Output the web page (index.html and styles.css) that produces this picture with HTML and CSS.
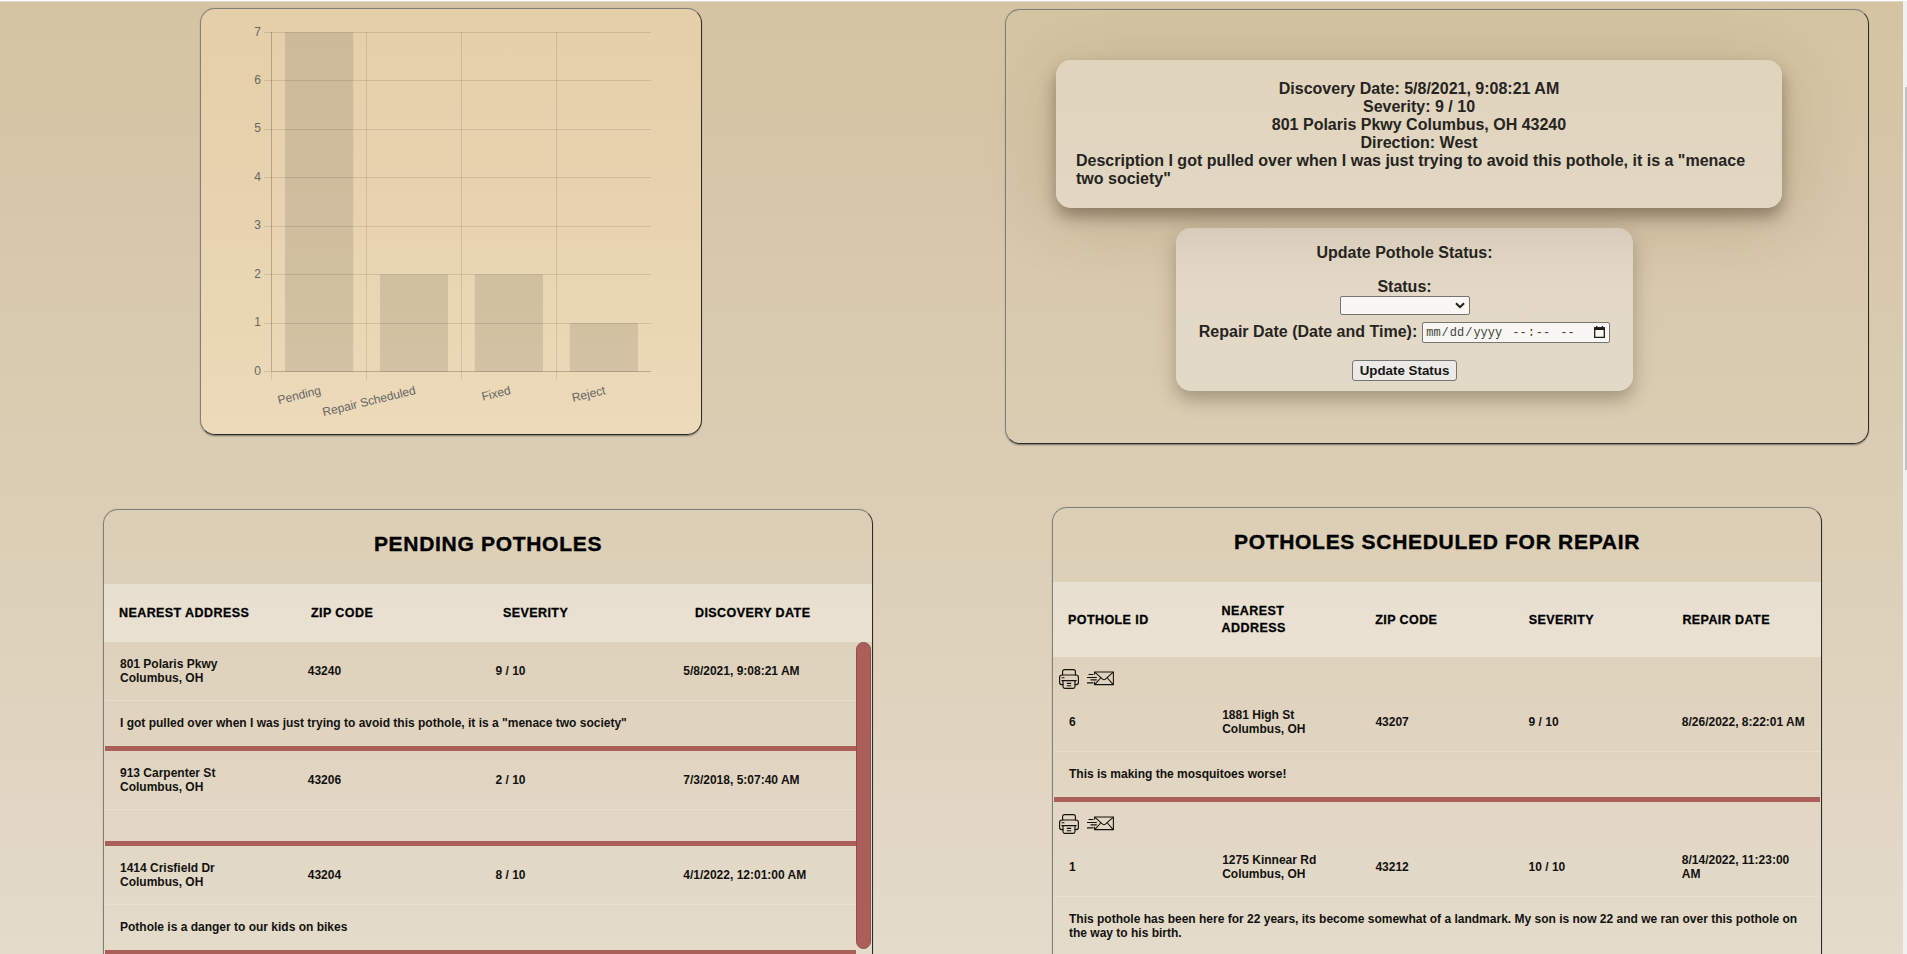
FILE: index.html
```html
<!DOCTYPE html>
<html lang="en">
<head>
<meta charset="utf-8">
<title>Pothole Dashboard</title>
<link rel="stylesheet" href="styles.css">
</head>
<body>
<svg width="0" height="0" class="defs">
  <symbol id="printer" viewBox="0 0 20 20">
    <g fill="none" stroke="#14120e" stroke-width="1.15" stroke-linejoin="round" stroke-linecap="round">
      <path d="M3.6 6V2.6Q3.6.6 5.6.6H14.4Q16.4.6 16.4 2.6V6"/>
      <path d="M4 15.6H2.6Q.6 15.6 .6 13.6V8.6Q.6 6 3 6H17Q19.4 6 19.4 8.6V13.6Q19.4 15.6 17.4 15.6H16"/>
      <path d="M4 11.6H16V17.6Q16 19.4 14.2 19.4H5.8Q4 19.4 4 17.6ZM2.8 11.6H17.2M3 8.7H5M8.2 14.3H11.8M8.2 16.7H11.8"/>
    </g>
  </symbol>
  <symbol id="mail" viewBox="0 0 27 15">
    <g fill="none" stroke="#14120e" stroke-width="1.1">
      <path d="M7.6 3.6V1H26.4V13.6H7.6V10.8"/>
      <path d="M8 1.3L15.6 8.2Q17 9.4 18.4 8.2L26 1.3M8 13.4L13.6 7M26 13.4L20.4 7"/>
      <path d="M1.5 3.5H6.5M0 6.5H9.8M3.5 8.9H9.8M0 11.9H6.5"/>
    </g>
  </symbol>
</svg>
<main class="page">
  <section class="col col-left">
    <div class="card chart-card">
      <svg class="chart" width="500" height="425" viewBox="201 9 500 425">
        <g class="grid">
          <path d="M264 32.5H651M264 80.5H651M264 129.5H651M264 177.5H651M264 226.5H651M264 274.5H651M264 323.5H651M264 371.5H271"/>
          <path d="M366.5 32V380M461.5 32V380M556.5 32V380M271.5 372V380"/>
          <path class="axis" d="M271.5 32V371M271 371.5H651"/>
        </g>
        <g class="bars">
          <rect x="285" y="32" width="68.2" height="339.5"/>
          <rect x="379.9" y="274.3" width="68.2" height="97.2"/>
          <rect x="474.8" y="274.3" width="68.2" height="97.2"/>
          <rect x="569.7" y="323" width="68.2" height="48.5"/>
        </g>
        <g class="labels">
          <text x="261" y="36">7</text><text x="261" y="84">6</text><text x="261" y="132">5</text><text x="261" y="181">4</text>
          <text x="261" y="229">3</text><text x="261" y="278">2</text><text x="261" y="326">1</text><text x="261" y="375">0</text>
          <text transform="translate(321.5 394) rotate(-13.5)">Pending</text>
          <text transform="translate(416.3 394) rotate(-13.5)">Repair Scheduled</text>
          <text transform="translate(511.2 394) rotate(-13.5)">Fixed</text>
          <text transform="translate(606 394) rotate(-13.5)">Reject</text>
        </g>
      </svg>
    </div>
    <div class="card table-card pending">
      <h2>PENDING POTHOLES</h2>
      <div class="head four"><div>NEAREST ADDRESS</div><div>ZIP CODE</div><div>SEVERITY</div><div>DISCOVERY DATE</div></div>
      <div class="scroll">
        <div class="rows">
          <div class="row four"><div>801 Polaris Pkwy<br>Columbus, OH</div><div>43240</div><div>9 / 10</div><div>5/8/2021, 9:08:21 AM</div></div>
          <div class="desc">I got pulled over when I was just trying to avoid this pothole, it is a "menace two society"</div>
          <div class="row four"><div>913 Carpenter St<br>Columbus, OH</div><div>43206</div><div>2 / 10</div><div>7/3/2018, 5:07:40 AM</div></div>
          <div class="desc"></div>
          <div class="row four"><div>1414 Crisfield Dr<br>Columbus, OH</div><div>43204</div><div>8 / 10</div><div>4/1/2022, 12:01:00 AM</div></div>
          <div class="desc">Pothole is a danger to our kids on bikes</div>
        </div>
        <div class="track"><div class="thumb"></div></div>
      </div>
    </div>
  </section>
  <section class="col col-right">
    <div class="card detail-card">
      <div class="info">
        <div>Discovery Date: 5/8/2021, 9:08:21 AM</div>
        <div>Severity: 9 / 10</div>
        <div>801 Polaris Pkwy Columbus, OH 43240</div>
        <div>Direction: West</div>
        <p>Description I got pulled over when I was just trying to avoid this pothole, it is a "menace two society"</p>
      </div>
      <form class="update">
        <div class="form-title">Update Pothole Status:</div>
        <label class="status-label">Status:</label>
        <div class="select"><svg width="10" height="7" viewBox="0 0 10 7"><path d="M1 1.2L5 5.2L9 1.2" fill="none" stroke="#1f1d18" stroke-width="2"/></svg></div>
        <div class="date-row">
          <label>Repair Date (Date and Time):</label>
          <div class="date"><span>mm</span>/<span>dd</span>/<span>yyyy</span><span class="time">--</span>:<span>--</span><span class="ampm">--</span>
            <svg width="11" height="12" viewBox="0 0 11 12"><path d="M.7 2H10.3V11.3H.7Z" fill="none" stroke="#1f1d18" stroke-width="1.3"/><path d="M0 1.2H11V4H0ZM2 0H3.3V2H2ZM7.7 0H9V2H7.7Z" fill="#1f1d18"/></svg>
          </div>
        </div>
        <button type="button">Update Status</button>
      </form>
    </div>
    <div class="card table-card scheduled">
      <h2>POTHOLES SCHEDULED FOR REPAIR</h2>
      <div class="head five"><div>POTHOLE ID</div><div>NEAREST ADDRESS</div><div>ZIP CODE</div><div>SEVERITY</div><div>REPAIR DATE</div></div>
      <div class="rows">
        <div class="actions"><svg width="20" height="20"><use href="#printer"/></svg><svg width="27" height="15"><use href="#mail"/></svg></div>
        <div class="row five"><div>6</div><div>1881 High St<br>Columbus, OH</div><div>43207</div><div>9 / 10</div><div class="when">8/26/2022, 8:22:01 AM</div></div>
        <div class="desc">This is making the mosquitoes worse!</div>
        <div class="actions"><svg width="20" height="20"><use href="#printer"/></svg><svg width="27" height="15"><use href="#mail"/></svg></div>
        <div class="row five"><div>1</div><div>1275 Kinnear Rd<br>Columbus, OH</div><div>43212</div><div>10 / 10</div><div class="when">8/14/2022, 11:23:00 AM</div></div>
        <div class="desc">This pothole has been here for 22 years, its become somewhat of a landmark. My son is now 22 and we ran over this pothole on the way to his birth.</div>
      </div>
    </div>
  </section>
</main>
<div class="page-scroll"><div class="page-thumb"></div></div>
</body>
</html>
```
FILE: styles.css
```css
* { box-sizing: border-box; }
html, body { margin: 0; height: 954px; overflow: hidden; }
body {
  display: flex;
  border-top: 1px solid #fff;
  font: bold 16px/18px "Liberation Sans", Arial, sans-serif;
  color: #26241e;
}
.defs { display: none; }
.page {
  display: flex;
  width: 1903px;
  height: 953px;
  overflow: hidden;
  border-top: 1px solid #dcd9d3;
  background: linear-gradient(#d4c4a2 0%, #d5c5a4 8%, #d7c6aa 22%, #d8c9ac 28%, #dccfb6 56%, #e0d4c0 76%, #e4dbca 100%);
}
.page-scroll { width: 4px; padding: 86px 0 0 2px; background: #f1f1f1; }
.page-thumb { height: 383px; background: #c1c1c1; }
.col-left { width: 770px; margin-left: 103px; padding-top: 6px; }
.col-right { width: 864px; margin-left: 132px; padding-top: 7px; }

.card {
  border: 1px solid;
  border-color: #7f7f7c #2b2b2a #2b2b2a #7f7f7c;
  border-radius: 15px;
  box-shadow: 0 2px 2px -1px rgba(0, 0, 0, .45), 0 0 1px rgba(0, 0, 0, .25);
}
.chart-card {
  width: 502px;
  height: 427px;
  margin-left: 97px;
  background: linear-gradient(#e5cfa9, #e6d2ad 35%, #e8d2b0 45%, #e8d5b1 60%, #ecdab9);
}
.chart { display: block; }
.grid path { fill: none; stroke: rgba(0, 0, 0, .1); }
.grid .axis { stroke: rgba(0, 0, 0, .22); }
.bars rect { fill: rgba(0, 0, 0, .1); }
.labels text { font: 12px "Liberation Sans", Arial, sans-serif; fill: #666; text-anchor: end; }

.detail-card { height: 435px; padding: 50px 0 0 50px; }
.info {
  width: 726px;
  height: 148px;
  padding: 20px;
  border-radius: 15px;
  text-align: center;
  background: linear-gradient(#e0d4bd, #e2d7c3);
  box-shadow: 0 9px 16px rgba(40, 28, 10, .38), 0 10px 70px rgba(80, 60, 20, .17);
}
.info p { margin: 0; text-align: left; }
.update {
  display: flex;
  flex-direction: column;
  align-items: center;
  position: relative;
  width: 457px;
  height: 163px;
  margin: 20px 0 0 120px;
  border-radius: 15px;
  background: linear-gradient(#d7cbb9, #dfd4c1 18%, #e2d8c5 36%, #e3d9c7);
  box-shadow: 0 9px 16px rgba(40, 28, 10, .26), 0 4px 36px rgba(80, 60, 20, .06);
}
.form-title { margin-top: 16px; }
.status-label { margin-top: 16px; }
.select {
  display: flex;
  align-items: center;
  justify-content: flex-end;
  width: 130px;
  height: 19px;
  padding-right: 4px;
  border: 1px solid #767571;
  border-radius: 2px;
  background: #f9f7f3;
}
.date-row { display: flex; align-items: center; gap: 5px; height: 21px; margin-top: 7px; }
.date-row label { margin-top: -2px; }
.date {
  display: flex;
  align-items: center;
  width: 188px;
  height: 21px;
  padding: 1px 4px 0 2px;
  border: 1px solid #767571;
  border-radius: 2px;
  background: #f9f7f3;
  font: 12px/14px "Liberation Mono", monospace;
  color: #45433e;
}
.date span { padding: 0 1px; }
.date .time { margin-left: 8px; }
.date .ampm { margin-left: 8px; }
.date svg { margin: -2px 0 0 auto; }
.update button {
  width: 105px;
  height: 21px;
  margin-top: 17px;
  padding: 0;
  border: 1px solid #767571;
  border-radius: 3px;
  background: #ebeae7;
  font: bold 13.33px/15px "Liberation Sans", Arial, sans-serif;
  color: #171613;
}

.table-card { width: 770px; height: 600px; color: #13120f; font-size: 12px; line-height: 14px; }
.pending { margin-top: 74px; }
.scheduled { margin: 63px 0 0 47px; }
.table-card h2 {
  height: 74px;
  margin: 0;
  padding-top: 22px;
  font-size: 21px;
  line-height: 24px;
  letter-spacing: .7px;
  text-align: center;
  color: #000;
  -webkit-text-stroke: .4px #000;
}
.head { padding: 0; background: rgba(255, 255, 255, .34); font-size: 12.5px; line-height: 17px; letter-spacing: .42px; color: #000; align-items: center; -webkit-text-stroke: .3px #000; }
.head > div { padding: 21px 15px 20px; }
.four { display: grid; grid-template-columns: repeat(4, 1fr); }
.five { display: grid; grid-template-columns: repeat(5, 1fr); }
.scroll { display: flex; padding: 0 1px; }
.scroll .rows { width: 751px; }
.scheduled .rows { margin: 0 1px; }
.row { height: 58px; align-items: center; }
.row > div { padding: 0 15px; }
.desc {
  padding: 15px 15px 16px;
  border-top: 1px solid rgba(255, 255, 255, .2);
  border-bottom: 5px solid #ab5f59;
}
.track { width: 15px; }
.thumb { height: 307px; border: 1px solid #8d504a; border-radius: 8px; background: #ab5f59; }
.actions { display: flex; gap: 8px; height: 36px; padding: 12px 0 0 5px; }
.actions svg + svg { margin-top: 1.5px; }
.row > .when { padding-right: 13px; }
```
